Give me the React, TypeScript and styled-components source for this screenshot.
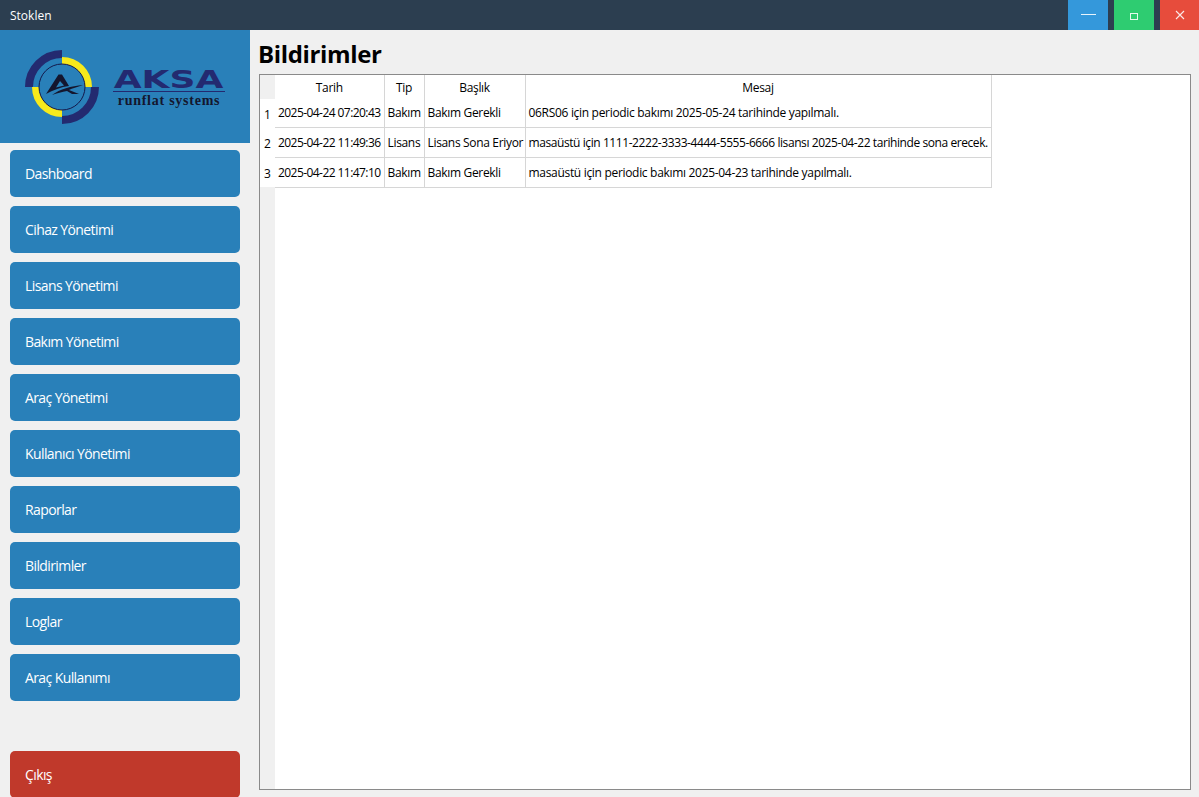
import * as React from "react";
import styled, { createGlobalStyle } from "styled-components";

const Color = {
  TITLE: "#2c3e50",
  BLUE: "#2980b9",
  RED: "#c0392b",
  PAGE: "#f0f0f0",
  GRID: "#d6d6d6",
  NAVY: "#232a70",
  YELLOW: "#f7ea1b",
};

const NAV_ITEMS = [
  "Dashboard",
  "Cihaz Yönetimi",
  "Lisans Yönetimi",
  "Bakım Yönetimi",
  "Araç Yönetimi",
  "Kullanıcı Yönetimi",
  "Raporlar",
  "Bildirimler",
  "Loglar",
  "Araç Kullanımı",
];

const ROWS = [
  {
    date: "2025-04-24 07:20:43",
    kind: "Bakım",
    title: "Bakım Gerekli",
    message: "06RS06 için periodic bakımı 2025-05-24 tarihinde yapılmalı.",
  },
  {
    date: "2025-04-22 11:49:36",
    kind: "Lisans",
    title: "Lisans Sona Eriyor",
    message: "masaüstü için 1111-2222-3333-4444-5555-6666 lisansı 2025-04-22 tarihinde sona erecek.",
  },
  {
    date: "2025-04-22 11:47:10",
    kind: "Bakım",
    title: "Bakım Gerekli",
    message: "masaüstü için periodic bakımı 2025-04-23 tarihinde yapılmalı.",
  },
];

const LogoMark = () => (
  <svg width="74" height="74" viewBox="0 0 74 74" fill="none">
    <path d="M37 4 A33 33 0 0 0 4 37" stroke={Color.NAVY} strokeWidth="8" />
    <path d="M37 70 A33 33 0 0 0 70 37" stroke={Color.NAVY} strokeWidth="8" />
    <path d="M37 10.5 A26.5 26.5 0 0 1 63.5 37" stroke={Color.YELLOW} strokeWidth="7" />
    <path d="M37 63.5 A26.5 26.5 0 0 1 10.5 37" stroke={Color.YELLOW} strokeWidth="7" />
    <circle cx="37" cy="37" r="23" stroke="#14184a" strokeWidth="1" />
    <path d="M21 44 L33.5 24.5 L37 24.5 L44 36 C36 37 28 40 21 44 Z" fill="#14162e" />
    <path d="M35 31 L31 37.5 L39 35.5 Z" fill={Color.BLUE} />
    <path d="M27 45 C35 39 46 36 58 35 C52 37 47 38.5 44 40 L54 44 L47 44 L42 41 C37 42 32 43 27 45 Z" fill="#14162e" />
  </svg>
);

const App: React.FC = () => {
  return (
    <Window>
      <GlobalStyle />
      <TitleBar>
        <AppName>Stoklen</AppName>
        <WindowButtons>
          <WindowButton $bg="#3498db">
            <MinimizeGlyph />
          </WindowButton>
          <WindowButton $bg="#2ecc71">
            <MaximizeGlyph />
          </WindowButton>
          <WindowButton $bg="#e74c3c">
            <svg width="10" height="10" viewBox="0 0 10 10" fill="none">
              <path d="M1 1 L9 9 M9 1 L1 9" stroke="#fbe9e7" strokeWidth="1.1" />
            </svg>
          </WindowButton>
        </WindowButtons>
      </TitleBar>
      <Body>
        <Sidebar>
          <LogoBox>
            <LogoMark />
            <LogoText>
              <LogoName>
                <LogoLetters>AKSA</LogoLetters>
              </LogoName>
              <LogoTagline>runflat systems</LogoTagline>
            </LogoText>
          </LogoBox>
          <Nav>
            {NAV_ITEMS.map(item => (
              <NavButton key={item}>{item}</NavButton>
            ))}
            <ExitButton>Çıkış</ExitButton>
          </Nav>
        </Sidebar>
        <Main>
          <PageTitle>Bildirimler</PageTitle>
          <TableFrame>
            <RowHeader>
              <CornerCell />
              {ROWS.map((row, index) => (
                <RowNumber key={row.date} $first={index === 0}>
                  {index + 1}
                </RowNumber>
              ))}
              <RowHeaderRest />
            </RowHeader>
            <Table>
              <colgroup>
                <col width="109" />
                <col width="40" />
                <col width="101" />
                <col width="466" />
              </colgroup>
              <thead>
                <tr>
                  <HeadCell>Tarih</HeadCell>
                  <HeadCell>Tip</HeadCell>
                  <HeadCell>Başlık</HeadCell>
                  <HeadCell>Mesaj</HeadCell>
                </tr>
              </thead>
              <tbody>
                {ROWS.map((row, index) => (
                  <BodyRow key={row.date} $first={index === 0}>
                    <DateCell>{row.date}</DateCell>
                    <BodyCell>{row.kind}</BodyCell>
                    <BodyCell>{row.title}</BodyCell>
                    <MessageCell $long={row.message.length > 80}>{row.message}</MessageCell>
                  </BodyRow>
                ))}
              </tbody>
            </Table>
          </TableFrame>
        </Main>
      </Body>
    </Window>
  );
};

const GlobalStyle = createGlobalStyle`
  html, body {
    margin: 0;
    padding: 0;
    overflow: hidden;
    background: ${Color.PAGE};
  }
  * {
    box-sizing: border-box;
  }
`;

const Window = styled.div`
  display: flex;
  flex-direction: column;
  width: 1199px;
  height: 797px;
  overflow: hidden;
  font-family: "Open Sans", "Noto Sans", sans-serif;
  background: ${Color.PAGE};
`;

const TitleBar = styled.div`
  display: flex;
  flex: 0 0 30px;
  align-items: center;
  justify-content: space-between;
  background: ${Color.TITLE};
`;

const AppName = styled.div`
  padding-left: 10px;
  font-size: 12px;
  color: #fff;
`;

const WindowButtons = styled.div`
  display: flex;
  gap: 6px;
  height: 100%;
`;

const WindowButton = styled.div<{ $bg: string }>`
  display: flex;
  align-items: center;
  justify-content: center;
  width: 40px;
  height: 100%;
  background: ${props => props.$bg};

  &:last-child {
    width: 39px;
  }
`;

const MinimizeGlyph = styled.div`
  width: 15px;
  height: 1px;
  margin-bottom: 2px;
  background: #e8f4fc;
`;

const MaximizeGlyph = styled.div`
  width: 8px;
  height: 7px;
  margin-top: 3px;
  border: 1px solid #e3f9ec;
`;

const Body = styled.div`
  display: flex;
  flex: 1;
  min-height: 0;
`;

const Sidebar = styled.div`
  display: flex;
  flex: 0 0 250px;
  flex-direction: column;
`;

const LogoBox = styled.div`
  display: flex;
  flex: 0 0 113px;
  align-items: center;
  gap: 14px;
  padding: 0 0 0 25px;
  background: ${Color.BLUE};
`;

const LogoText = styled.div`
  display: flex;
  flex-direction: column;
  align-items: center;
  width: 112px;
  padding-top: 3px;
`;

const LogoName = styled.div`
  display: flex;
  align-items: center;
  justify-content: center;
  width: 100%;
  height: 24px;
  border-bottom: 1px solid ${Color.NAVY};
`;

const LogoLetters = styled.span`
  font-family: "DejaVu Sans", sans-serif;
  font-size: 24px;
  font-weight: bold;
  line-height: 22px;
  color: ${Color.NAVY};
  transform: scaleX(1.5);
`;

const LogoTagline = styled.div`
  margin-top: 2px;
  font-family: "Liberation Serif", serif;
  font-size: 14px;
  font-weight: bold;
  line-height: 14px;
  letter-spacing: 0.75px;
  white-space: nowrap;
  color: #14162e;
`;

const Nav = styled.div`
  display: flex;
  flex-direction: column;
  gap: 9px;
  padding: 7px 10px 0;
`;

const NavButton = styled.div`
  display: flex;
  align-items: center;
  height: 47px;
  padding-left: 15px;
  border-radius: 5px;
  font-size: 14px;
  letter-spacing: -0.6px;
  color: #fff;
  background: ${Color.BLUE};
`;

const ExitButton = styled(NavButton)`
  flex: 0 0 47px;
  margin-top: 41px;
  background: ${Color.RED};
`;

const Main = styled.div`
  display: flex;
  flex: 1;
  flex-direction: column;
  min-width: 0;
  padding: 7px 8px 7px 9px;
`;

const PageTitle = styled.h1`
  height: 37px;
  margin: 0 0 0 -1px;
  font-size: 24px;
  font-weight: bold;
  line-height: 33px;
  letter-spacing: -0.35px;
  color: #000;
`;

const TableFrame = styled.div`
  display: flex;
  flex: 1;
  border: 1px solid #8a8a8a;
  background: #fff;
`;

const RowHeader = styled.div`
  display: flex;
  flex: 0 0 15px;
  flex-direction: column;
  font-size: 12px;
  color: #000;
`;

const CornerCell = styled.div`
  flex: 0 0 24px;
  background: ${Color.PAGE};
`;

const RowNumber = styled.div<{ $first: boolean }>`
  display: flex;
  flex: 0 0 ${props => (props.$first ? 28 : 30)}px;
  align-items: center;
  justify-content: center;
  padding-top: 2px;
  background: #fff;
`;

const RowHeaderRest = styled.div`
  flex: 1;
  background: ${Color.PAGE};
`;

const Table = styled.table`
  align-self: flex-start;
  width: 716px;
  border-collapse: collapse;
  table-layout: fixed;
  font-size: 12px;
  letter-spacing: -0.33px;
  color: #000;
`;

const HeadCell = styled.th`
  height: 24px;
  padding: 0;
  border-right: 1px solid ${Color.GRID};
  font-weight: normal;
  text-align: center;
  vertical-align: middle;
`;

const BodyRow = styled.tr<{ $first: boolean }>`
  height: ${props => (props.$first ? 28 : 30)}px;
`;

const BodyCell = styled.td`
  padding: 0 0 0 3px;
  border-right: 1px solid ${Color.GRID};
  border-bottom: 1px solid ${Color.GRID};
  white-space: nowrap;
  overflow: hidden;
  vertical-align: middle;
`;

const DateCell = styled(BodyCell)`
  letter-spacing: -0.56px;
`;

const MessageCell = styled(BodyCell)<{ $long: boolean }>`
  letter-spacing: ${props => (props.$long ? -0.42 : -0.31)}px;
`;

export default App;
